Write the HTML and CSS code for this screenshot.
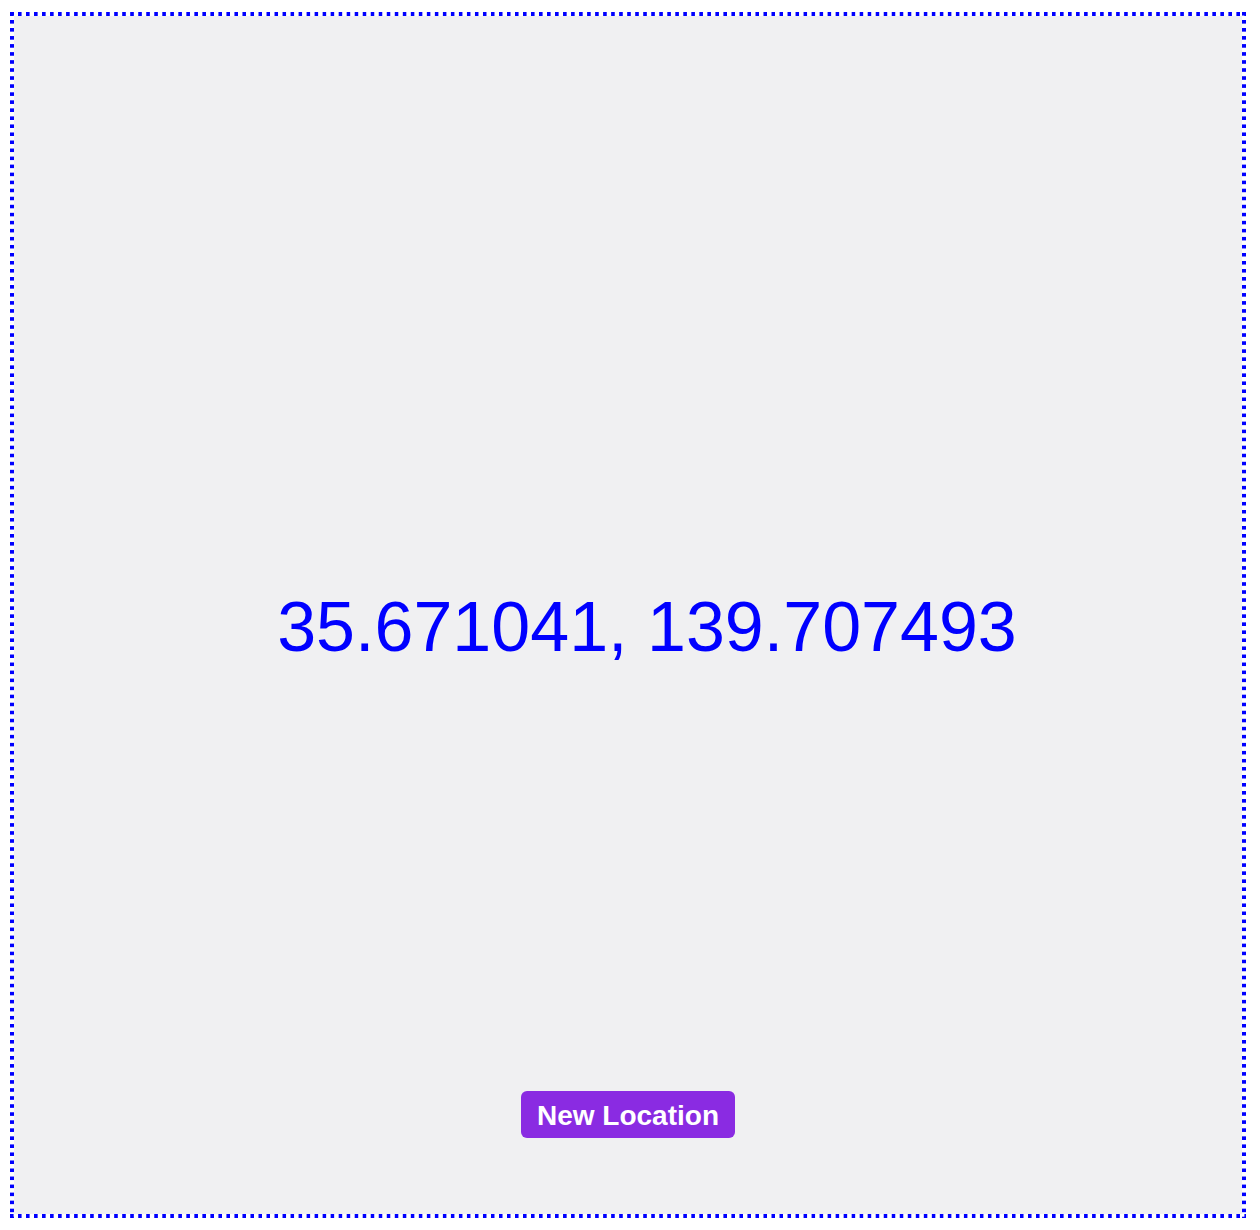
FILE: index.html
```html
<!DOCTYPE html>
<html>
<head>
<meta charset="utf-8">
<link rel="stylesheet" href="styles.css">
</head>
<body>
<div class="frame">
  <div class="coords">35.671041, 139.707493</div>
  <button class="new-btn">New Location</button>
</div>
</body>
</html>
```
FILE: styles.css
```css
html, body {
  margin: 0;
  padding: 0;
  background: #ffffff;
}
.frame {
  box-sizing: border-box;
  margin: 12px 14px 12px 10px;
  height: 1206px;
  border: 4px solid transparent;
  background:
    linear-gradient(90deg, #0000ff 4px, transparent 4px) 0 0 / 8px 4px space no-repeat border-box,
    linear-gradient(90deg, #0000ff 4px, transparent 4px) 0 100% / 8px 4px space no-repeat border-box,
    linear-gradient(#0000ff 4px, transparent 4px) 0 0 / 4px 8px no-repeat space border-box,
    linear-gradient(#0000ff 4px, transparent 4px) 100% 0 / 4px 8px no-repeat space border-box,
    linear-gradient(#f0f0f2, #f0f0f2) padding-box;
  display: flex;
  flex-direction: column;
  align-items: center;
  font-family: "Liberation Sans", Arial, sans-serif;
}
.coords {
  flex: 1;
  display: flex;
  align-items: center;
  justify-content: center;
  padding-top: 146px;
  padding-left: 38px;
  color: #0000ff;
  font-size: 70px;
}
.new-btn {
  margin-bottom: 76px;
  width: 214px;
  height: 47px;
  border: none;
  border-radius: 6px;
  background: #8a2be2;
  color: #ffffff;
  font-family: "Liberation Sans", Arial, sans-serif;
  font-weight: bold;
  font-size: 28px;
  padding: 3px 0 0 0;
}
```
